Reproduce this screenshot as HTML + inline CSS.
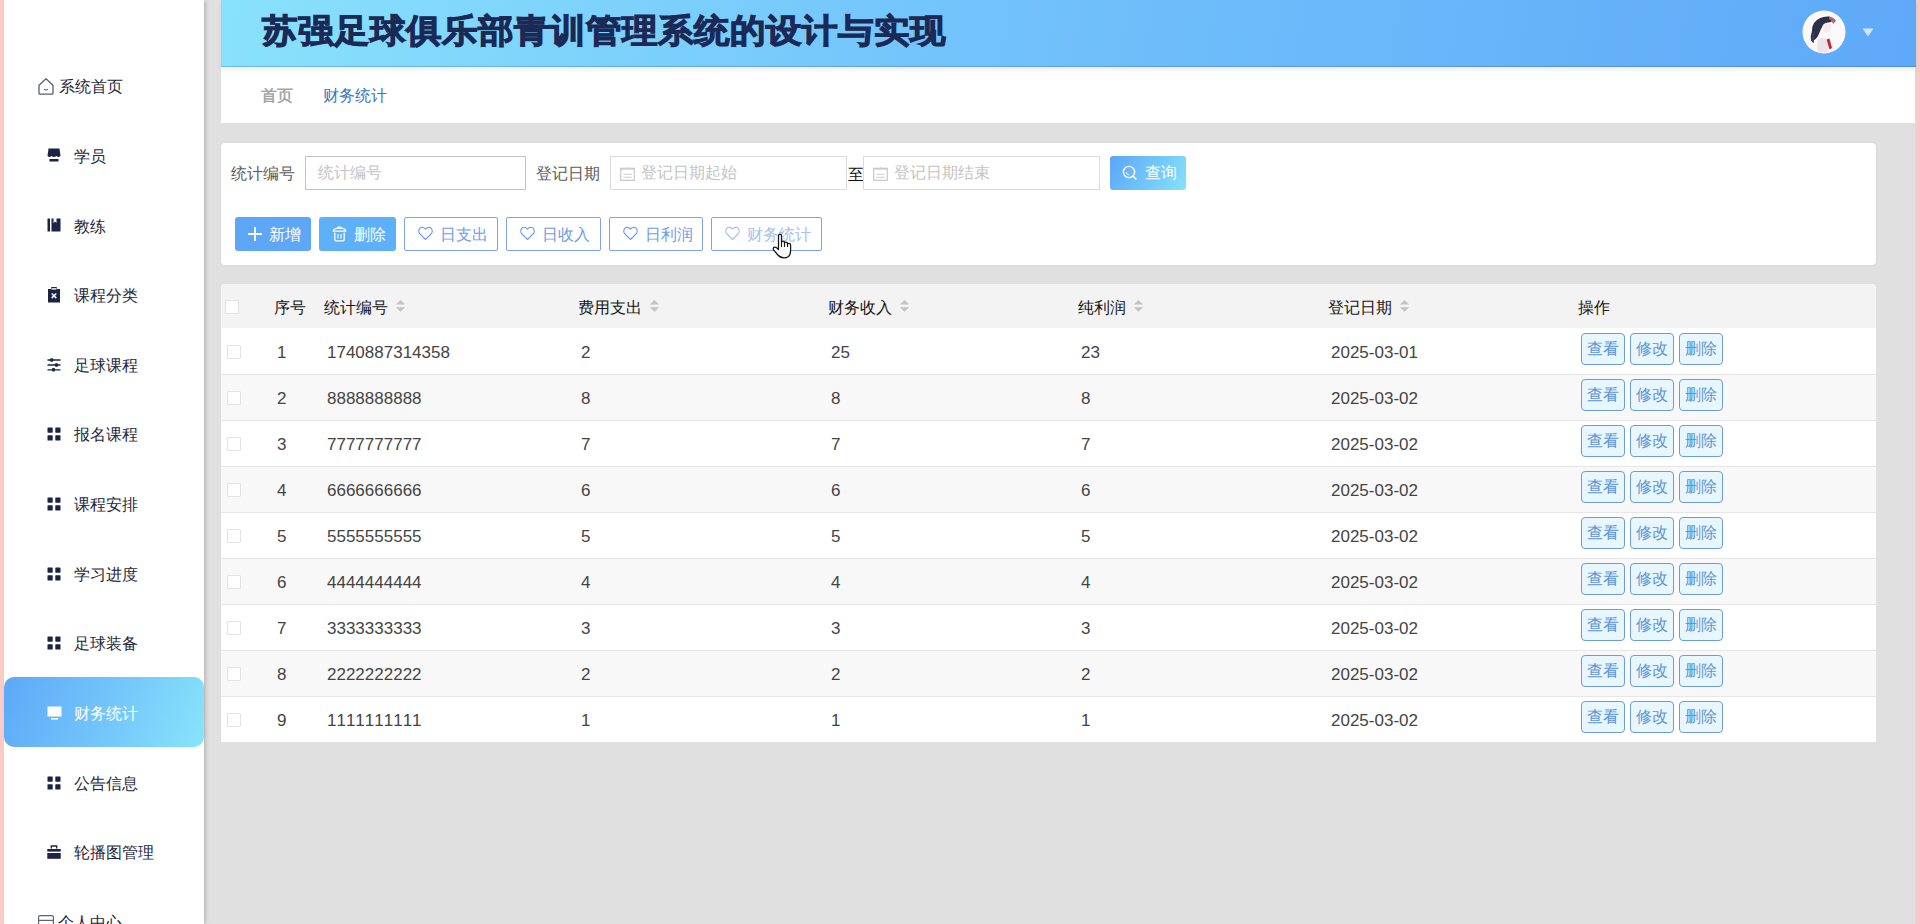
<!DOCTYPE html>
<html><head><meta charset="utf-8">
<style>
*{box-sizing:border-box;margin:0;padding:0}
html,body{width:1920px;height:924px;overflow:hidden}
body{position:relative;background:#e0e0e0;font-family:"Liberation Sans",sans-serif;color:#333}
.abs{position:absolute}
#pinkL{left:0;top:0;width:4px;height:924px;background:linear-gradient(to right,#fdcbc6 60%,#ead2ce)}
#pinkR{left:1915px;top:0;width:5px;height:924px;background:linear-gradient(to right,#e6d6d4,#fac9c3 40%)}
#side{left:4px;top:0;width:200px;height:924px;background:#fff;box-shadow:2px 0 4px -1px rgba(0,0,0,.25)}
#header{left:221px;top:0;width:1695px;height:67px;box-shadow:inset 0 -1px 1px rgba(20,60,120,.22),0 3px 4px rgba(0,0,0,.07);z-index:2;background:linear-gradient(100deg,#89e2fc 0%,#72c2fb 45%,#5fa9f8 100%)}
#title{z-index:3;left:262px;top:9px;font-size:36px;transform:scaleY(0.93);transform-origin:0 0;font-weight:900;color:#1a2955;-webkit-text-stroke:1.2px #1a2955;white-space:nowrap;line-height:48px;letter-spacing:0}
#crumb{left:221px;top:67px;width:1695px;height:56px;background:#fff}
#filter{left:221px;top:143px;width:1655px;height:122px;background:#fff;border-radius:4px;box-shadow:0 0 3px rgba(0,0,0,.07)}
#table{left:221px;top:284px;width:1655px;height:458px;background:#fff;border-radius:4px}
.stxt{font-size:16px;line-height:24px;white-space:nowrap}
#active{left:4px;top:677px;width:200px;height:70px;border-radius:10px;background:linear-gradient(110deg,#5ea8f8 0%,#72c4fa 50%,#88e4fb 100%)}
.t16{font-size:16px;line-height:24px;white-space:nowrap}
.inp{background:#fff;border:1px solid #dcdcdc;height:34px}
.ph{color:#c4c4c4}
.btn{height:34px;border-radius:3px}
.obtn{height:34px;border:1px solid #7ea3e2;border-radius:2px;background:#fff;color:#6f9de6}
.th{font-size:16px;line-height:24px;white-space:nowrap;color:#161616}
.td{font-kerning:none;font-size:17px;line-height:24px;white-space:nowrap;color:#444}
.row{left:221px;width:1655px;height:46px}
.cb{width:14px;height:14px;border:1px solid #e3e3e3;background:#fff;border-radius:1px}
.ab{width:44px;height:32px;border:1px solid #6e9dd6;border-radius:4px;background:#e8f7fe;color:#5e95d6;font-size:16px;line-height:30px;text-align:center;white-space:nowrap}
</style></head><body>
<div id="pinkL" class="abs"></div>
<div id="side" class="abs"></div>
<div id="active" class="abs"></div>
<svg class="abs" style="left:37px;top:77px" width="18" height="19" viewBox="0 0 18 19"><path d="M2 8.3 L9 1.7 L16 8.3 V16.2 Q16 17.2 15 17.2 H3 Q2 17.2 2 16.2 Z" fill="none" stroke="#5a5e6c" stroke-width="1.3" stroke-linejoin="round"/><path d="M7.2 12.3 Q9 13.6 10.8 12.3" fill="none" stroke="#5a5e6c" stroke-width="1.1"/></svg>
<div class="abs stxt" style="left:59px;top:75px;color:#25273a">系统首页</div>
<svg class="abs" style="left:47px;top:148px" width="14" height="14" viewBox="0 0 14 14"><path d="M1.5 0.5 H12.5 L13.5 8 H0.5 Z" fill="#1c2346"/><path d="M0.5 8 Q2.6 10 4.6 8 Q7 10 9.4 8 Q11.4 10 13.5 8 Z" fill="#1c2346"/><rect x="2.5" y="11" width="9" height="2.5" fill="#1c2346"/></svg>
<div class="abs stxt" style="left:74px;top:145px;color:#25273a">学员</div>
<svg class="abs" style="left:47px;top:218px" width="14" height="14" viewBox="0 0 14 14"><rect x="0.5" y="0.5" width="2.5" height="13" fill="#1c2346"/><path d="M4.5 0.5 H6.5 V5 L8 3.5 L9.5 5 V0.5 H13.5 V13.5 H4.5 Z" fill="#1c2346"/></svg>
<div class="abs stxt" style="left:74px;top:215px;color:#25273a">教练</div>
<svg class="abs" style="left:47px;top:287px" width="14" height="16" viewBox="0 0 14 16"><path d="M1 2 H4 V1 Q4 0 5 0 H9 Q10 0 10 1 V2 H13 V15.5 H1 Z" fill="#1c2346"/><rect x="4.5" y="1.2" width="5" height="1.4" fill="#fff"/><path d="M4.7 6.5 L9.3 11.1 M9.3 6.5 L4.7 11.1" stroke="#fff" stroke-width="1.6"/></svg>
<div class="abs stxt" style="left:74px;top:284px;color:#25273a">课程分类</div>
<svg class="abs" style="left:47px;top:358px" width="14" height="14" viewBox="0 0 14 14"><path d="M0.5 2 H13.5 M0.5 7 H13.5 M0.5 11.8 H13.5" stroke="#1c2346" stroke-width="1.3"/><rect x="3.2" y="0.3" width="3" height="3.4" rx="1" fill="#1c2346"/><rect x="8" y="5.3" width="3" height="3.4" rx="1" fill="#1c2346"/><rect x="5" y="10.1" width="3" height="3.4" rx="1" fill="#1c2346"/></svg>
<div class="abs stxt" style="left:74px;top:354px;color:#25273a">足球课程</div>
<svg class="abs" style="left:47px;top:427px" width="14" height="14" viewBox="0 0 14 14"><rect x="0.5" y="0.5" width="5.2" height="5.2" rx="0.6" fill="#1c2346"/><rect x="8.3" y="0.5" width="5.2" height="5.2" rx="0.6" fill="#1c2346"/><rect x="0.5" y="8.3" width="5.2" height="5.2" rx="0.6" fill="#1c2346"/><rect x="8.3" y="8.3" width="5.2" height="5.2" rx="0.6" fill="#1c2346"/></svg>
<div class="abs stxt" style="left:74px;top:423px;color:#25273a">报名课程</div>
<svg class="abs" style="left:47px;top:497px" width="14" height="14" viewBox="0 0 14 14"><rect x="0.5" y="0.5" width="5.2" height="5.2" rx="0.6" fill="#1c2346"/><rect x="8.3" y="0.5" width="5.2" height="5.2" rx="0.6" fill="#1c2346"/><rect x="0.5" y="8.3" width="5.2" height="5.2" rx="0.6" fill="#1c2346"/><rect x="8.3" y="8.3" width="5.2" height="5.2" rx="0.6" fill="#1c2346"/></svg>
<div class="abs stxt" style="left:74px;top:493px;color:#25273a">课程安排</div>
<svg class="abs" style="left:47px;top:567px" width="14" height="14" viewBox="0 0 14 14"><rect x="0.5" y="0.5" width="5.2" height="5.2" rx="0.6" fill="#1c2346"/><rect x="8.3" y="0.5" width="5.2" height="5.2" rx="0.6" fill="#1c2346"/><rect x="0.5" y="8.3" width="5.2" height="5.2" rx="0.6" fill="#1c2346"/><rect x="8.3" y="8.3" width="5.2" height="5.2" rx="0.6" fill="#1c2346"/></svg>
<div class="abs stxt" style="left:74px;top:563px;color:#25273a">学习进度</div>
<svg class="abs" style="left:47px;top:636px" width="14" height="14" viewBox="0 0 14 14"><rect x="0.5" y="0.5" width="5.2" height="5.2" rx="0.6" fill="#1c2346"/><rect x="8.3" y="0.5" width="5.2" height="5.2" rx="0.6" fill="#1c2346"/><rect x="0.5" y="8.3" width="5.2" height="5.2" rx="0.6" fill="#1c2346"/><rect x="8.3" y="8.3" width="5.2" height="5.2" rx="0.6" fill="#1c2346"/></svg>
<div class="abs stxt" style="left:74px;top:632px;color:#25273a">足球装备</div>
<svg class="abs" style="left:47px;top:706px" width="15" height="15" viewBox="0 0 15 15"><rect x="0.5" y="0.5" width="14" height="10" fill="#fff"/><rect x="4" y="12" width="7" height="1.6" fill="#fff"/></svg>
<div class="abs stxt" style="left:74px;top:702px;color:#fff">财务统计</div>
<svg class="abs" style="left:47px;top:776px" width="14" height="14" viewBox="0 0 14 14"><rect x="0.5" y="0.5" width="5.2" height="5.2" rx="0.6" fill="#1c2346"/><rect x="8.3" y="0.5" width="5.2" height="5.2" rx="0.6" fill="#1c2346"/><rect x="0.5" y="8.3" width="5.2" height="5.2" rx="0.6" fill="#1c2346"/><rect x="8.3" y="8.3" width="5.2" height="5.2" rx="0.6" fill="#1c2346"/></svg>
<div class="abs stxt" style="left:74px;top:772px;color:#25273a">公告信息</div>
<svg class="abs" style="left:47px;top:845px" width="14" height="14" viewBox="0 0 14 14"><path d="M4.3 3.6 V1 H9.7 V3.6" fill="none" stroke="#1c2346" stroke-width="1.3"/><rect x="0.3" y="4" width="13.4" height="2.6" fill="#1c2346"/><rect x="0.3" y="8" width="13.4" height="5.8" fill="#1c2346"/></svg>
<div class="abs stxt" style="left:74px;top:841px;color:#25273a">轮播图管理</div>
<svg class="abs" style="left:37px;top:914px" width="18" height="18" viewBox="0 0 18 18"><rect x="1.6" y="1.6" width="14.8" height="14.8" rx="1.5" fill="none" stroke="#606470" stroke-width="1.2"/><path d="M1.6 6.4 H16.4" stroke="#606470" stroke-width="1.2"/></svg>
<div class="abs stxt" style="left:58px;top:911px;color:#25273a">个人中心</div>
<div id="header" class="abs"></div>
<div id="title" class="abs">苏强足球俱乐部青训管理系统的设计与实现</div>
<svg class="abs" style="left:1802px;top:10px;z-index:3" width="44" height="44" viewBox="0 0 44 44">
<defs><clipPath id="cc"><circle cx="22" cy="22" r="20.5"/></clipPath></defs>
<circle cx="22" cy="22" r="21.5" fill="#fff"/>
<g clip-path="url(#cc)">
<rect x="0" y="0" width="44" height="44" fill="#fdf8fa"/>
<path d="M12 13 Q17 6 27 6.5 Q31 8 31 11 L27 12.5 Q23 12 21 15 Q18 21 16 26 Q13 31 9 31 Q8 26 10 21 Q10 16 12 13 Z" fill="#2c3149"/>
<path d="M13 20 Q11 26 12 33 L10 32 Q9 25 13 20 Z" fill="#3a3f58"/>
<path d="M27 6.5 Q32 7 34 11 L31 14 Q30 10 27 9 Z" fill="#b86474"/>
<path d="M21 15 Q24 12 29 14 Q30 19 27 22 Q24 24 21 21 Z" fill="#f8e8ec"/>
<path d="M16 29 Q20 27 24 29 L27 44 H15 Z" fill="#e9e4ea"/>
<path d="M24.5 29.5 L27.5 28.5 L30 38 L27.5 39.5 Z" fill="#c02a38"/>
</g>
</svg>
<svg class="abs" style="left:1862px;top:28px;z-index:3" width="12" height="9" viewBox="0 0 12 9"><path d="M0.5 0.5 H11.5 L6 8.5 Z" fill="#cfe6fd"/></svg>
<div id="crumb" class="abs"></div>
<div id="filter" class="abs"></div>
<div id="table" class="abs"></div>
<div class="abs" style="left:221px;top:284px;width:1655px;height:44px;background:#f3f3f3;border-radius:4px 4px 0 0"></div>
<div class="abs cb" style="left:225px;top:300px"></div>
<div class="abs th" style="left:274px;top:296px">序号</div>
<div class="abs th" style="left:324px;top:296px">统计编号</div>
<svg class="abs" style="left:395px;top:299px" width="11" height="14" viewBox="0 0 11 14"><path d="M5.5 1 L10.2 5.6 H0.8 Z M5.5 12.8 L10.2 8.2 H0.8 Z" fill="#c4c4c4"/></svg>
<div class="abs th" style="left:578px;top:296px">费用支出</div>
<svg class="abs" style="left:649px;top:299px" width="11" height="14" viewBox="0 0 11 14"><path d="M5.5 1 L10.2 5.6 H0.8 Z M5.5 12.8 L10.2 8.2 H0.8 Z" fill="#c4c4c4"/></svg>
<div class="abs th" style="left:828px;top:296px">财务收入</div>
<svg class="abs" style="left:899px;top:299px" width="11" height="14" viewBox="0 0 11 14"><path d="M5.5 1 L10.2 5.6 H0.8 Z M5.5 12.8 L10.2 8.2 H0.8 Z" fill="#c4c4c4"/></svg>
<div class="abs th" style="left:1078px;top:296px">纯利润</div>
<svg class="abs" style="left:1133px;top:299px" width="11" height="14" viewBox="0 0 11 14"><path d="M5.5 1 L10.2 5.6 H0.8 Z M5.5 12.8 L10.2 8.2 H0.8 Z" fill="#c4c4c4"/></svg>
<div class="abs th" style="left:1328px;top:296px">登记日期</div>
<svg class="abs" style="left:1399px;top:299px" width="11" height="14" viewBox="0 0 11 14"><path d="M5.5 1 L10.2 5.6 H0.8 Z M5.5 12.8 L10.2 8.2 H0.8 Z" fill="#c4c4c4"/></svg>
<div class="abs th" style="left:1578px;top:296px">操作</div>
<div class="abs row" style="top:328px;background:#fff"></div>
<div class="abs" style="left:221px;top:374px;width:1655px;height:1px;background:#e6e6e6;z-index:1"></div>
<div class="abs cb" style="left:227px;top:345px"></div>
<div class="abs td" style="left:277px;top:341px">1</div>
<div class="abs td" style="left:327px;top:341px">1740887314358</div>
<div class="abs td" style="left:581px;top:341px">2</div>
<div class="abs td" style="left:831px;top:341px">25</div>
<div class="abs td" style="left:1081px;top:341px">23</div>
<div class="abs td" style="left:1331px;top:341px">2025-03-01</div>
<div class="abs ab" style="left:1581px;top:333px">查看</div>
<div class="abs ab" style="left:1630px;top:333px">修改</div>
<div class="abs ab" style="left:1679px;top:333px">删除</div>
<div class="abs row" style="top:374px;background:#f8f8f8"></div>
<div class="abs" style="left:221px;top:420px;width:1655px;height:1px;background:#e6e6e6;z-index:1"></div>
<div class="abs cb" style="left:227px;top:391px"></div>
<div class="abs td" style="left:277px;top:387px">2</div>
<div class="abs td" style="left:327px;top:387px">8888888888</div>
<div class="abs td" style="left:581px;top:387px">8</div>
<div class="abs td" style="left:831px;top:387px">8</div>
<div class="abs td" style="left:1081px;top:387px">8</div>
<div class="abs td" style="left:1331px;top:387px">2025-03-02</div>
<div class="abs ab" style="left:1581px;top:379px">查看</div>
<div class="abs ab" style="left:1630px;top:379px">修改</div>
<div class="abs ab" style="left:1679px;top:379px">删除</div>
<div class="abs row" style="top:420px;background:#fff"></div>
<div class="abs" style="left:221px;top:466px;width:1655px;height:1px;background:#e6e6e6;z-index:1"></div>
<div class="abs cb" style="left:227px;top:437px"></div>
<div class="abs td" style="left:277px;top:433px">3</div>
<div class="abs td" style="left:327px;top:433px">7777777777</div>
<div class="abs td" style="left:581px;top:433px">7</div>
<div class="abs td" style="left:831px;top:433px">7</div>
<div class="abs td" style="left:1081px;top:433px">7</div>
<div class="abs td" style="left:1331px;top:433px">2025-03-02</div>
<div class="abs ab" style="left:1581px;top:425px">查看</div>
<div class="abs ab" style="left:1630px;top:425px">修改</div>
<div class="abs ab" style="left:1679px;top:425px">删除</div>
<div class="abs row" style="top:466px;background:#f8f8f8"></div>
<div class="abs" style="left:221px;top:512px;width:1655px;height:1px;background:#e6e6e6;z-index:1"></div>
<div class="abs cb" style="left:227px;top:483px"></div>
<div class="abs td" style="left:277px;top:479px">4</div>
<div class="abs td" style="left:327px;top:479px">6666666666</div>
<div class="abs td" style="left:581px;top:479px">6</div>
<div class="abs td" style="left:831px;top:479px">6</div>
<div class="abs td" style="left:1081px;top:479px">6</div>
<div class="abs td" style="left:1331px;top:479px">2025-03-02</div>
<div class="abs ab" style="left:1581px;top:471px">查看</div>
<div class="abs ab" style="left:1630px;top:471px">修改</div>
<div class="abs ab" style="left:1679px;top:471px">删除</div>
<div class="abs row" style="top:512px;background:#fff"></div>
<div class="abs" style="left:221px;top:558px;width:1655px;height:1px;background:#e6e6e6;z-index:1"></div>
<div class="abs cb" style="left:227px;top:529px"></div>
<div class="abs td" style="left:277px;top:525px">5</div>
<div class="abs td" style="left:327px;top:525px">5555555555</div>
<div class="abs td" style="left:581px;top:525px">5</div>
<div class="abs td" style="left:831px;top:525px">5</div>
<div class="abs td" style="left:1081px;top:525px">5</div>
<div class="abs td" style="left:1331px;top:525px">2025-03-02</div>
<div class="abs ab" style="left:1581px;top:517px">查看</div>
<div class="abs ab" style="left:1630px;top:517px">修改</div>
<div class="abs ab" style="left:1679px;top:517px">删除</div>
<div class="abs row" style="top:558px;background:#f8f8f8"></div>
<div class="abs" style="left:221px;top:604px;width:1655px;height:1px;background:#e6e6e6;z-index:1"></div>
<div class="abs cb" style="left:227px;top:575px"></div>
<div class="abs td" style="left:277px;top:571px">6</div>
<div class="abs td" style="left:327px;top:571px">4444444444</div>
<div class="abs td" style="left:581px;top:571px">4</div>
<div class="abs td" style="left:831px;top:571px">4</div>
<div class="abs td" style="left:1081px;top:571px">4</div>
<div class="abs td" style="left:1331px;top:571px">2025-03-02</div>
<div class="abs ab" style="left:1581px;top:563px">查看</div>
<div class="abs ab" style="left:1630px;top:563px">修改</div>
<div class="abs ab" style="left:1679px;top:563px">删除</div>
<div class="abs row" style="top:604px;background:#fff"></div>
<div class="abs" style="left:221px;top:650px;width:1655px;height:1px;background:#e6e6e6;z-index:1"></div>
<div class="abs cb" style="left:227px;top:621px"></div>
<div class="abs td" style="left:277px;top:617px">7</div>
<div class="abs td" style="left:327px;top:617px">3333333333</div>
<div class="abs td" style="left:581px;top:617px">3</div>
<div class="abs td" style="left:831px;top:617px">3</div>
<div class="abs td" style="left:1081px;top:617px">3</div>
<div class="abs td" style="left:1331px;top:617px">2025-03-02</div>
<div class="abs ab" style="left:1581px;top:609px">查看</div>
<div class="abs ab" style="left:1630px;top:609px">修改</div>
<div class="abs ab" style="left:1679px;top:609px">删除</div>
<div class="abs row" style="top:650px;background:#f8f8f8"></div>
<div class="abs" style="left:221px;top:696px;width:1655px;height:1px;background:#e6e6e6;z-index:1"></div>
<div class="abs cb" style="left:227px;top:667px"></div>
<div class="abs td" style="left:277px;top:663px">8</div>
<div class="abs td" style="left:327px;top:663px">2222222222</div>
<div class="abs td" style="left:581px;top:663px">2</div>
<div class="abs td" style="left:831px;top:663px">2</div>
<div class="abs td" style="left:1081px;top:663px">2</div>
<div class="abs td" style="left:1331px;top:663px">2025-03-02</div>
<div class="abs ab" style="left:1581px;top:655px">查看</div>
<div class="abs ab" style="left:1630px;top:655px">修改</div>
<div class="abs ab" style="left:1679px;top:655px">删除</div>
<div class="abs row" style="top:696px;background:#fff"></div>
<div class="abs cb" style="left:227px;top:713px"></div>
<div class="abs td" style="left:277px;top:709px">9</div>
<div class="abs td" style="left:327px;top:709px">1111111111</div>
<div class="abs td" style="left:581px;top:709px">1</div>
<div class="abs td" style="left:831px;top:709px">1</div>
<div class="abs td" style="left:1081px;top:709px">1</div>
<div class="abs td" style="left:1331px;top:709px">2025-03-02</div>
<div class="abs ab" style="left:1581px;top:701px">查看</div>
<div class="abs ab" style="left:1630px;top:701px">修改</div>
<div class="abs ab" style="left:1679px;top:701px">删除</div>


<div class="abs t16" style="left:261px;top:84px;color:#9c9c9c;-webkit-text-stroke:0.35px #9c9c9c">首页</div>
<div class="abs t16" style="left:323px;top:84px;color:#3c74ba">财务统计</div>
<div class="abs t16" style="left:231px;top:162px;color:#5b5b5b">统计编号</div>
<div class="abs inp" style="left:305px;top:156px;width:221px;border-color:#c3c3c3"></div>
<div class="abs t16 ph" style="left:318px;top:161px">统计编号</div>
<div class="abs t16" style="left:536px;top:162px;color:#5b5b5b">登记日期</div>
<div class="abs inp" style="left:610px;top:156px;width:237px"></div>
<svg class="abs" style="left:620px;top:167px" width="15" height="14" viewBox="0 0 15 14"><rect x="0.7" y="1.3" width="13.6" height="12" fill="none" stroke="#c8c8c8" stroke-width="1.2"/><path d="M0.7 2 H14.3" stroke="#c8c8c8" stroke-width="1.2"/><path d="M3.3 7.3 H11.7 M3.3 10.3 H11.7" stroke="#c8c8c8" stroke-width="0.9"/><path d="M7.5 0.2 V1.5" stroke="#c8c8c8" stroke-width="1"/></svg>
<div class="abs t16 ph" style="left:641px;top:161px">登记日期起始</div>
<div class="abs t16" style="left:848px;top:163px;color:#111">至</div>
<div class="abs inp" style="left:863px;top:156px;width:237px"></div>
<svg class="abs" style="left:873px;top:167px" width="15" height="14" viewBox="0 0 15 14"><rect x="0.7" y="1.3" width="13.6" height="12" fill="none" stroke="#c8c8c8" stroke-width="1.2"/><path d="M0.7 2 H14.3" stroke="#c8c8c8" stroke-width="1.2"/><path d="M3.3 7.3 H11.7 M3.3 10.3 H11.7" stroke="#c8c8c8" stroke-width="0.9"/><path d="M7.5 0.2 V1.5" stroke="#c8c8c8" stroke-width="1"/></svg>
<div class="abs t16 ph" style="left:894px;top:161px">登记日期结束</div>
<div class="abs btn" style="left:1110px;top:156px;width:76px;background:linear-gradient(120deg,#5ca6f8,#86e2fa)"></div>
<svg class="abs" style="left:1122px;top:165px" width="16" height="16" viewBox="0 0 16 16"><circle cx="7" cy="7" r="5.6" fill="none" stroke="#fff" stroke-width="1.4"/><path d="M11 11 L14.5 14.5" stroke="#fff" stroke-width="1.5"/><path d="M4 7 Q4.5 9.5 7 10" fill="none" stroke="#fff" stroke-width="0.9"/></svg>
<div class="abs t16" style="left:1145px;top:161px;color:#fff">查询</div>

<div class="abs btn" style="left:235px;top:217px;width:76px;background:#5ea7f7"></div>
<svg class="abs" style="left:247px;top:226px" width="16" height="16" viewBox="0 0 16 16"><path d="M8 1 V15 M1 8 H15" stroke="#fff" stroke-width="1.8"/></svg>
<div class="abs t16" style="left:269px;top:223px;color:#fff">新增</div>
<div class="abs btn" style="left:319px;top:217px;width:77px;background:#5eb1f8"></div>
<svg class="abs" style="left:332px;top:226px" width="15" height="16" viewBox="0 0 15 16"><path d="M1.2 5.2 Q1.5 2.2 7.5 2.2 Q13.5 2.2 13.8 5.2 Z" fill="none" stroke="#fff" stroke-width="1.3" stroke-linejoin="round"/><path d="M6 2 V1 H9 V2" fill="none" stroke="#fff" stroke-width="1.1"/><path d="M2.8 6.5 V13.5 Q2.8 14.8 4 14.8 H11 Q12.2 14.8 12.2 13.5 V6.5" fill="none" stroke="#fff" stroke-width="1.3"/><path d="M6 8 V12.5 M9 8 V12.5" stroke="#fff" stroke-width="1.1"/></svg>
<div class="abs t16" style="left:354px;top:223px;color:#fff">删除</div>
<div class="abs obtn" style="left:404px;top:217px;width:94px"></div>
<svg class="abs" style="left:418px;top:226px" width="15" height="15" viewBox="0 0 15 15"><path d="M7.5 13.5 L2 8 Q0.5 6.5 0.8 4.5 Q1.3 1.5 4.2 1.3 Q6.2 1.3 7.5 3.2 Q8.8 1.3 10.8 1.3 Q13.7 1.5 14.2 4.5 Q14.5 6.5 13 8 Z" fill="none" stroke="#6f9de6" stroke-width="1.1" stroke-linejoin="round"/></svg>
<div class="abs t16" style="left:440px;top:223px;color:#6f9de6">日支出</div>
<div class="abs obtn" style="left:506px;top:217px;width:95px"></div>
<svg class="abs" style="left:520px;top:226px" width="15" height="15" viewBox="0 0 15 15"><path d="M7.5 13.5 L2 8 Q0.5 6.5 0.8 4.5 Q1.3 1.5 4.2 1.3 Q6.2 1.3 7.5 3.2 Q8.8 1.3 10.8 1.3 Q13.7 1.5 14.2 4.5 Q14.5 6.5 13 8 Z" fill="none" stroke="#6f9de6" stroke-width="1.1" stroke-linejoin="round"/></svg>
<div class="abs t16" style="left:542px;top:223px;color:#6f9de6">日收入</div>
<div class="abs obtn" style="left:609px;top:217px;width:94px"></div>
<svg class="abs" style="left:623px;top:226px" width="15" height="15" viewBox="0 0 15 15"><path d="M7.5 13.5 L2 8 Q0.5 6.5 0.8 4.5 Q1.3 1.5 4.2 1.3 Q6.2 1.3 7.5 3.2 Q8.8 1.3 10.8 1.3 Q13.7 1.5 14.2 4.5 Q14.5 6.5 13 8 Z" fill="none" stroke="#6f9de6" stroke-width="1.1" stroke-linejoin="round"/></svg>
<div class="abs t16" style="left:645px;top:223px;color:#6f9de6">日利润</div>
<div class="abs obtn" style="left:711px;top:217px;width:111px"></div>
<svg class="abs" style="left:725px;top:226px" width="15" height="15" viewBox="0 0 15 15"><path d="M7.5 13.5 L2 8 Q0.5 6.5 0.8 4.5 Q1.3 1.5 4.2 1.3 Q6.2 1.3 7.5 3.2 Q8.8 1.3 10.8 1.3 Q13.7 1.5 14.2 4.5 Q14.5 6.5 13 8 Z" fill="none" stroke="#a6bfee" stroke-width="1.1" stroke-linejoin="round"/></svg>
<div class="abs t16" style="left:747px;top:223px;color:#a6bfee">财务统计</div>
<svg class="abs" style="left:771px;top:233px" width="23" height="27" viewBox="0 0 23 27"><path d="M7.5 3 Q7.5 1.2 9 1.2 Q10.5 1.2 10.5 3 V9.5 Q10.5 8.2 12 8.2 Q13.5 8.2 13.5 9.8 V10.5 Q13.5 9.2 15 9.2 Q16.5 9.2 16.5 10.8 V11.5 Q16.5 10.3 18 10.3 Q19.6 10.3 19.6 12 V17.5 Q19.6 24.8 13 24.8 Q9 24.8 6.5 21.5 L2.6 16.8 Q1.6 15.2 3 14.4 Q4.6 13.6 7.5 16.5 Z" fill="#fff" stroke="#151515" stroke-width="1.25" stroke-linejoin="round"/><path d="M10.5 9.5 V14 M13.5 10.5 V14 M16.5 11.5 V14" stroke="#151515" stroke-width="1.1"/></svg>

<div id="pinkR" class="abs"></div>
</body></html>
